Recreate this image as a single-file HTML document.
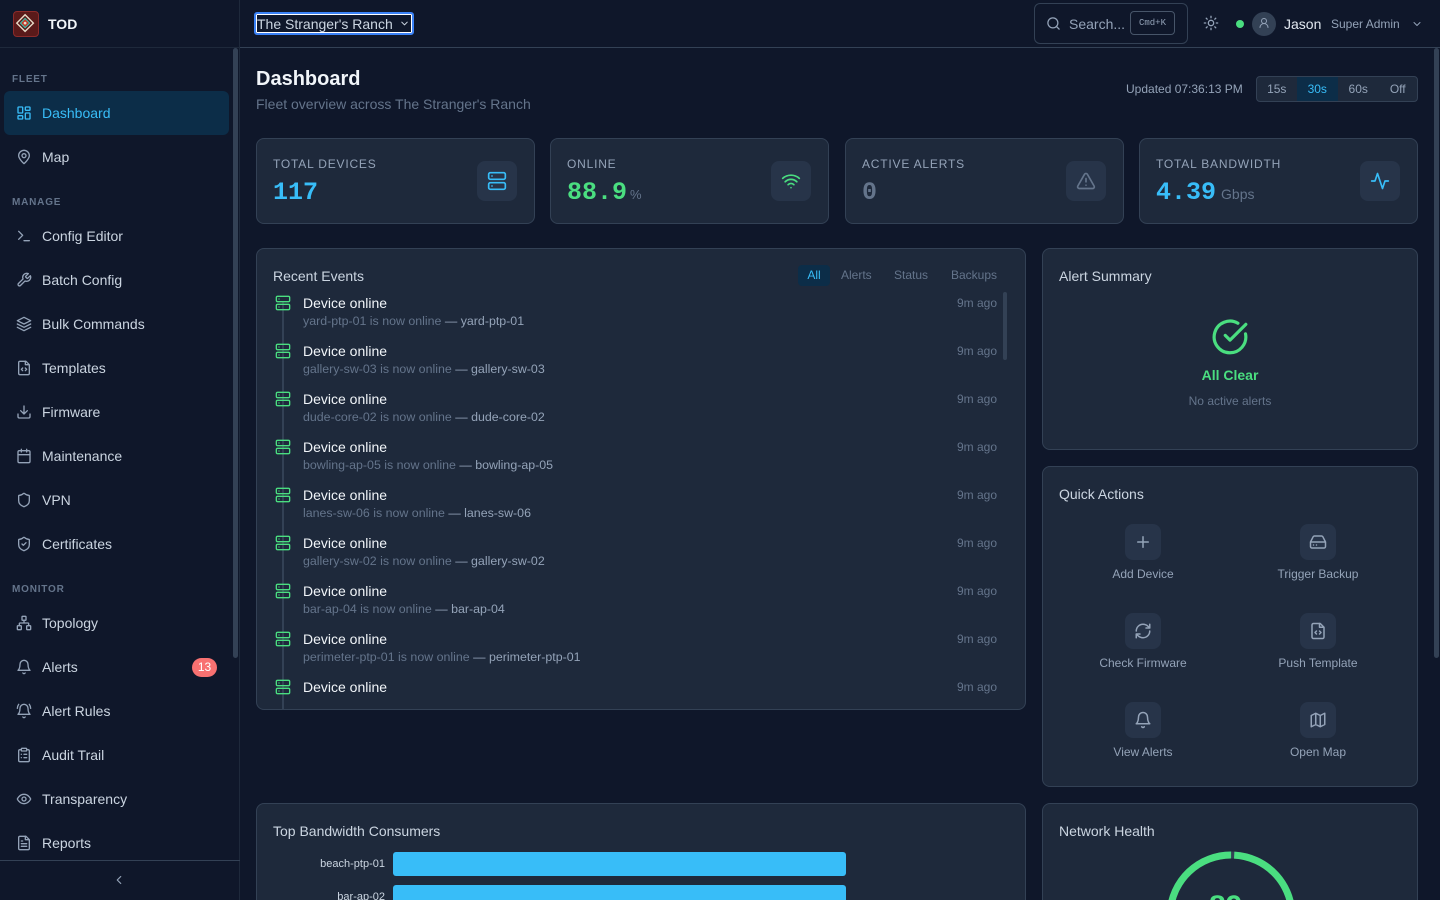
<!DOCTYPE html>
<html><head><meta charset="utf-8"><style>
*{box-sizing:border-box;margin:0;padding:0}
html{width:1440px;height:900px;overflow:hidden}
body{width:1440px;height:900px;overflow:hidden;background:#0f172a;font-family:"Liberation Sans",sans-serif;color:#e2e8f0;position:relative}
.a{position:absolute}
svg.i{width:16px;height:16px;fill:none;stroke:#94a3b8;stroke-width:2;stroke-linecap:round;stroke-linejoin:round}
.side{left:0;top:0;width:240px;height:900px;border-right:1px solid #1e293b;background:#0f172a}
.sec{left:12px;font-size:10px;font-weight:bold;letter-spacing:.8px;color:#64748b}
.it{left:4px;width:225px;height:36px;border-radius:6px;display:flex;align-items:center;padding-left:12px;font-size:14px;color:#cbd5e1}
.it svg{margin-right:10px}
.card{background:#1e293b;border:1px solid #334155;border-radius:8px}
.lbl{font-size:12px;letter-spacing:.8px;color:#94a3b8}
.num{font-family:"Liberation Mono",monospace;font-weight:bold;font-size:25px}
.ib{width:40px;height:40px;border-radius:8px;background:#273449;display:flex;align-items:center;justify-content:center}
.ib svg{width:20px;height:20px}
.ev{left:16px;width:726px;height:48px}
.ev .t{position:absolute;left:30px;top:0;font-size:14px;color:#f1f5f9}
.ev .s{position:absolute;left:30px;top:19px;font-size:12.4px;color:#64748b}
.ev .s b{font-weight:normal;color:#94a3b8}
.ev .tm{position:absolute;right:2px;top:1px;font-size:12px;color:#64748b}
.ev svg{position:absolute;left:2px;top:0;width:16px;height:16px;stroke:#4ade80}
.qa{width:176px;text-align:center;font-size:12px;color:#94a3b8}
.qa .ib{width:36px;height:36px;margin:0 auto 7px}
.qa .ib svg{width:18px;height:18px}
</style></head><body>

<div class="a side">
 <div class="a" style="left:0;top:47px;width:240px;height:1px;background:#1e293b"></div>
 <div class="a" style="left:13px;top:11px;width:26px;height:26px;border-radius:4px;background:#5a1a1a;border:1px solid #8b2b2b">
  <svg viewBox="0 0 26 26" width="24" height="24"><path d="M12 3 L21 12 L12 21 L3 12Z" fill="none" stroke="#e8dcc8" stroke-width="1.5"/><path d="M12 7 L17 12 L12 17 L7 12Z" fill="#c0392b" stroke="#2dd4bf" stroke-width="1"/><circle cx="12" cy="12" r="1.5" fill="#e8dcc8"/></svg>
 </div>
 <div class="a" style="left:48px;top:16px;font-size:14px;font-weight:bold;color:#f1f5f9">TOD</div>

 <div class="a sec" style="top:74px">FLEET</div>
 <div class="a it" style="top:91px;height:44px;background:#0c2d48;color:#38bdf8"><svg class="i" viewBox="0 0 24 24" style="stroke:#38bdf8"><rect x="3" y="3" width="7" height="9" rx="1"/><rect x="14" y="3" width="7" height="5" rx="1"/><rect x="14" y="12" width="7" height="9" rx="1"/><rect x="3" y="16" width="7" height="5" rx="1"/></svg>Dashboard</div>
 <div class="a it" style="top:139px"><svg class="i" viewBox="0 0 24 24"><path d="M20 10c0 5-8 12-8 12s-8-7-8-12a8 8 0 0 1 16 0Z"/><circle cx="12" cy="10" r="3"/></svg>Map</div>

 <div class="a sec" style="top:197px">MANAGE</div>
 <div class="a it" style="top:218px"><svg class="i" viewBox="0 0 24 24"><path d="m4 17 6-6-6-6M12 19h8"/></svg>Config Editor</div>
 <div class="a it" style="top:262px"><svg class="i" viewBox="0 0 24 24"><path d="M14.7 6.3a1 1 0 0 0 0 1.4l1.6 1.6a1 1 0 0 0 1.4 0l3.8-3.8a6 6 0 0 1-7.9 7.9l-6.9 6.9a2.1 2.1 0 0 1-3-3l6.9-6.9a6 6 0 0 1 7.9-7.9l-3.8 3.8Z"/></svg>Batch Config</div>
 <div class="a it" style="top:306px"><svg class="i" viewBox="0 0 24 24"><path d="m12 2 10 5-10 5L2 7Z"/><path d="m2 12 10 5 10-5M2 17l10 5 10-5"/></svg>Bulk Commands</div>
 <div class="a it" style="top:350px"><svg class="i" viewBox="0 0 24 24"><path d="M15 2H6a2 2 0 0 0-2 2v16a2 2 0 0 0 2 2h12a2 2 0 0 0 2-2V7Z"/><path d="M14 2v5h5M10 12l-2 2 2 2M14 16l2-2-2-2"/></svg>Templates</div>
 <div class="a it" style="top:394px"><svg class="i" viewBox="0 0 24 24"><path d="M21 15v4a2 2 0 0 1-2 2H5a2 2 0 0 1-2-2v-4M7 10l5 5 5-5M12 15V3"/></svg>Firmware</div>
 <div class="a it" style="top:438px"><svg class="i" viewBox="0 0 24 24"><rect x="3" y="4" width="18" height="18" rx="2"/><path d="M16 2v4M8 2v4M3 10h18"/></svg>Maintenance</div>
 <div class="a it" style="top:482px"><svg class="i" viewBox="0 0 24 24"><path d="M20 13c0 5-3.5 7.5-7.7 9a1 1 0 0 1-.7 0C7.5 20.5 4 18 4 13V6a1 1 0 0 1 1-1c2 0 4.5-1.2 6.2-2.7a1.2 1.2 0 0 1 1.5 0C14.5 3.8 17 5 19 5a1 1 0 0 1 1 1Z"/></svg>VPN</div>
 <div class="a it" style="top:526px"><svg class="i" viewBox="0 0 24 24"><path d="M20 13c0 5-3.5 7.5-7.7 9a1 1 0 0 1-.7 0C7.5 20.5 4 18 4 13V6a1 1 0 0 1 1-1c2 0 4.5-1.2 6.2-2.7a1.2 1.2 0 0 1 1.5 0C14.5 3.8 17 5 19 5a1 1 0 0 1 1 1Z"/><path d="m9 12 2 2 4-4"/></svg>Certificates</div>

 <div class="a sec" style="top:584px">MONITOR</div>
 <div class="a it" style="top:605px"><svg class="i" viewBox="0 0 24 24"><rect x="16" y="16" width="6" height="6" rx="1"/><rect x="2" y="16" width="6" height="6" rx="1"/><rect x="9" y="2" width="6" height="6" rx="1"/><path d="M5 16v-3a1 1 0 0 1 1-1h12a1 1 0 0 1 1 1v3M12 12V8"/></svg>Topology</div>
 <div class="a it" style="top:649px"><svg class="i" viewBox="0 0 24 24"><path d="M6 8a6 6 0 0 1 12 0c0 7 3 9 3 9H3s3-2 3-9M10.3 21a1.9 1.9 0 0 0 3.4 0"/></svg>Alerts<span style="position:absolute;left:188px;top:9px;width:25px;height:19px;border-radius:10px;background:#f87171;color:#fff;font-size:12px;text-align:center;line-height:19px">13</span></div>
 <div class="a it" style="top:693px"><svg class="i" viewBox="0 0 24 24"><path d="M6 8a6 6 0 0 1 12 0c0 7 3 9 3 9H3s3-2 3-9M10.3 21a1.9 1.9 0 0 0 3.4 0M4 2C2.8 3.7 2 5.7 2 8M22 8c0-2.3-.8-4.3-2-6"/></svg>Alert Rules</div>
 <div class="a it" style="top:737px"><svg class="i" viewBox="0 0 24 24"><rect x="8" y="2" width="8" height="4" rx="1"/><path d="M16 4h2a2 2 0 0 1 2 2v14a2 2 0 0 1-2 2H6a2 2 0 0 1-2-2V6a2 2 0 0 1 2-2h2M12 11h4M12 16h4M8 11h.01M8 16h.01"/></svg>Audit Trail</div>
 <div class="a it" style="top:781px"><svg class="i" viewBox="0 0 24 24"><path d="M2 12s3-7 10-7 10 7 10 7-3 7-10 7-10-7-10-7Z"/><circle cx="12" cy="12" r="3"/></svg>Transparency</div>
 <div class="a it" style="top:825px"><svg class="i" viewBox="0 0 24 24"><path d="M15 2H6a2 2 0 0 0-2 2v16a2 2 0 0 0 2 2h12a2 2 0 0 0 2-2V7Z"/><path d="M14 2v5h5M16 13H8M16 17H8M10 9H8"/></svg>Reports</div>
 <div class="a" style="left:233px;top:48px;width:5px;height:610px;border-radius:3px;background:#334155"></div>
 <div class="a" style="left:0;top:860px;width:240px;height:1px;background:#334155"></div>
 <svg class="a i" viewBox="0 0 24 24" style="left:112px;top:873px;width:14px;height:14px"><path d="m15 18-6-6 6-6"/></svg>
</div>

<!-- header -->
<div class="a" style="left:240px;top:47px;width:1200px;height:1px;background:#334155"></div>
<div class="a" style="left:254px;top:12px;width:160px;height:23px;border:2px solid #3b82f6;border-radius:3px;background:#0f172a;font-size:14px;color:#cbd5e1;padding:2px 0 0 1px;box-shadow:0 0 0 1px #fff inset">The Stranger's Ranch<svg class="a i" viewBox="0 0 24 24" style="left:143px;top:4px;width:11px;height:11px;stroke:#cbd5e1"><path d="m6 9 6 6 6-6"/></svg></div>
<div class="a" style="left:1034px;top:3px;width:154px;height:41px;border:1px solid #334155;border-radius:6px"></div>
<svg class="a i" viewBox="0 0 24 24" style="left:1046px;top:16px;width:15px;height:15px"><circle cx="11" cy="11" r="8"/><path d="m21 21-4.3-4.3"/></svg>
<div class="a" style="left:1069px;top:16px;font-size:14px;color:#94a3b8">Search...</div>
<div class="a" style="left:1130px;top:11px;width:45px;height:24px;border:1px solid #475569;border-radius:4px;font-family:'Liberation Mono',monospace;font-size:9px;color:#94a3b8;text-align:center;line-height:22px">Cmd+K</div>
<svg class="a i" viewBox="0 0 24 24" style="left:1203px;top:15px;width:16px;height:16px"><circle cx="12" cy="12" r="4"/><path d="M12 2v2M12 20v2M4.9 4.9l1.4 1.4M17.7 17.7l1.4 1.4M2 12h2M20 12h2M6.3 17.7l-1.4 1.4M19.1 4.9l-1.4 1.4"/></svg>
<div class="a" style="left:1236px;top:20px;width:8px;height:8px;border-radius:50%;background:#4ade80"></div>
<div class="a" style="left:1252px;top:12px;width:24px;height:24px;border-radius:50%;background:#334155"></div>
<svg class="a i" viewBox="0 0 24 24" style="left:1258px;top:17px;width:12px;height:12px"><circle cx="12" cy="8" r="5"/><path d="M20 21a8 8 0 0 0-16 0"/></svg>
<div class="a" style="left:1284px;top:16px;font-size:14px;color:#e2e8f0">Jason</div>
<div class="a" style="left:1331px;top:17px;font-size:12px;color:#94a3b8">Super Admin</div>
<svg class="a i" viewBox="0 0 24 24" style="left:1411px;top:18px;width:12px;height:12px"><path d="m6 9 6 6 6-6"/></svg>
<div class="a" style="left:1434px;top:48px;width:5px;height:610px;border-radius:3px;background:#334155"></div>

<!-- title -->
<div class="a" style="left:256px;top:68px;font-size:20px;font-weight:bold;color:#f1f5f9">Dashboard</div>
<div class="a" style="left:256px;top:96px;font-size:14px;color:#64748b">Fleet overview across The Stranger's Ranch</div>
<div class="a" style="left:1126px;top:82px;font-size:12px;color:#94a3b8">Updated 07:36:13 PM</div>
<div class="a" style="left:1256px;top:76px;width:162px;height:26px;border:1px solid #334155;border-radius:4px;background:#1e293b;display:flex;font-size:12px;color:#94a3b8;overflow:hidden">
 <div style="width:40px;text-align:center;line-height:24px">15s</div>
 <div style="width:42px;text-align:center;line-height:24px;background:#0c2d48;color:#38bdf8">30s</div>
 <div style="width:41px;text-align:center;line-height:24px">60s</div>
 <div style="width:39px;text-align:center;line-height:24px">Off</div>
</div>

<!-- stats -->
<div class="a card" style="left:256px;top:138px;width:279px;height:86px">
 <div class="a lbl" style="left:16px;top:18px">TOTAL DEVICES</div>
 <div class="a num" style="left:16px;top:39px;color:#38bdf8">117</div>
 <div class="a ib" style="left:220px;top:22px"><svg class="i" viewBox="0 0 24 24" style="stroke:#38bdf8"><rect x="2" y="2" width="20" height="8" rx="2"/><rect x="2" y="14" width="20" height="8" rx="2"/><path d="M6 6h.01M6 18h.01"/></svg></div>
</div>
<div class="a card" style="left:550px;top:138px;width:279px;height:86px">
 <div class="a lbl" style="left:16px;top:18px">ONLINE</div>
 <div class="a num" style="left:16px;top:39px;color:#4ade80">88.9<span style="font-family:'Liberation Sans';font-weight:normal;font-size:13px;color:#64748b;margin-left:3px">%</span></div>
 <div class="a ib" style="left:220px;top:22px"><svg class="i" viewBox="0 0 24 24" style="stroke:#4ade80"><path d="M12 20h.01M2 8.8a15 15 0 0 1 20 0M5 12.9a10 10 0 0 1 14 0M8.5 16.4a5 5 0 0 1 7 0"/></svg></div>
</div>
<div class="a card" style="left:845px;top:138px;width:279px;height:86px">
 <div class="a lbl" style="left:16px;top:18px">ACTIVE ALERTS</div>
 <div class="a num" style="left:16px;top:39px;color:#64748b">0</div>
 <div class="a ib" style="left:220px;top:22px"><svg class="i" viewBox="0 0 24 24" style="stroke:#64748b"><path d="m21.7 18-8-14a2 2 0 0 0-3.5 0l-8 14A2 2 0 0 0 4 21h16a2 2 0 0 0 1.7-3Z"/><path d="M12 9v4M12 17h.01"/></svg></div>
</div>
<div class="a card" style="left:1139px;top:138px;width:279px;height:86px">
 <div class="a lbl" style="left:16px;top:18px">TOTAL BANDWIDTH</div>
 <div class="a num" style="left:16px;top:39px;color:#38bdf8">4.39<span style="font-family:'Liberation Sans';font-weight:normal;font-size:14px;color:#64748b;margin-left:5px">Gbps</span></div>
 <div class="a ib" style="left:220px;top:22px"><svg class="i" viewBox="0 0 24 24" style="stroke:#38bdf8"><path d="M22 12h-4l-3 9L9 3l-3 9H2"/></svg></div>
</div>

<!-- recent events -->
<div class="a card" style="left:256px;top:248px;width:770px;height:462px;overflow:hidden">
 <div class="a" style="left:16px;top:19px;font-size:14px;color:#cbd5e1">Recent Events</div>
 <div class="a" style="left:541px;top:16px;width:32px;height:21px;border-radius:4px;background:#0c2d48;color:#38bdf8;font-size:12px;text-align:center;line-height:21px">All</div>
 <div class="a" style="left:584px;top:19px;font-size:12px;color:#64748b">Alerts</div>
 <div class="a" style="left:637px;top:19px;font-size:12px;color:#64748b">Status</div>
 <div class="a" style="left:694px;top:19px;font-size:12px;color:#64748b">Backups</div>
 <div class="a" style="left:25px;top:52px;width:2px;height:410px;background:#334155"></div>
 <div class="a" style="left:746px;top:43px;width:4px;height:68px;border-radius:2px;background:#334155"></div>
 <div class="a ev" style="top:46px"><svg class="i" viewBox="0 0 24 24"><rect x="2" y="2" width="20" height="8" rx="2"/><rect x="2" y="14" width="20" height="8" rx="2"/><path d="M6 6h.01M6 18h.01"/></svg><div class="t">Device online</div><div class="s">yard-ptp-01 is now online <b>— yard-ptp-01</b></div><div class="tm">9m ago</div></div>
 <div class="a ev" style="top:94px"><svg class="i" viewBox="0 0 24 24"><rect x="2" y="2" width="20" height="8" rx="2"/><rect x="2" y="14" width="20" height="8" rx="2"/><path d="M6 6h.01M6 18h.01"/></svg><div class="t">Device online</div><div class="s">gallery-sw-03 is now online <b>— gallery-sw-03</b></div><div class="tm">9m ago</div></div>
 <div class="a ev" style="top:142px"><svg class="i" viewBox="0 0 24 24"><rect x="2" y="2" width="20" height="8" rx="2"/><rect x="2" y="14" width="20" height="8" rx="2"/><path d="M6 6h.01M6 18h.01"/></svg><div class="t">Device online</div><div class="s">dude-core-02 is now online <b>— dude-core-02</b></div><div class="tm">9m ago</div></div>
 <div class="a ev" style="top:190px"><svg class="i" viewBox="0 0 24 24"><rect x="2" y="2" width="20" height="8" rx="2"/><rect x="2" y="14" width="20" height="8" rx="2"/><path d="M6 6h.01M6 18h.01"/></svg><div class="t">Device online</div><div class="s">bowling-ap-05 is now online <b>— bowling-ap-05</b></div><div class="tm">9m ago</div></div>
 <div class="a ev" style="top:238px"><svg class="i" viewBox="0 0 24 24"><rect x="2" y="2" width="20" height="8" rx="2"/><rect x="2" y="14" width="20" height="8" rx="2"/><path d="M6 6h.01M6 18h.01"/></svg><div class="t">Device online</div><div class="s">lanes-sw-06 is now online <b>— lanes-sw-06</b></div><div class="tm">9m ago</div></div>
 <div class="a ev" style="top:286px"><svg class="i" viewBox="0 0 24 24"><rect x="2" y="2" width="20" height="8" rx="2"/><rect x="2" y="14" width="20" height="8" rx="2"/><path d="M6 6h.01M6 18h.01"/></svg><div class="t">Device online</div><div class="s">gallery-sw-02 is now online <b>— gallery-sw-02</b></div><div class="tm">9m ago</div></div>
 <div class="a ev" style="top:334px"><svg class="i" viewBox="0 0 24 24"><rect x="2" y="2" width="20" height="8" rx="2"/><rect x="2" y="14" width="20" height="8" rx="2"/><path d="M6 6h.01M6 18h.01"/></svg><div class="t">Device online</div><div class="s">bar-ap-04 is now online <b>— bar-ap-04</b></div><div class="tm">9m ago</div></div>
 <div class="a ev" style="top:382px"><svg class="i" viewBox="0 0 24 24"><rect x="2" y="2" width="20" height="8" rx="2"/><rect x="2" y="14" width="20" height="8" rx="2"/><path d="M6 6h.01M6 18h.01"/></svg><div class="t">Device online</div><div class="s">perimeter-ptp-01 is now online <b>— perimeter-ptp-01</b></div><div class="tm">9m ago</div></div>
 <div class="a ev" style="top:430px"><svg class="i" viewBox="0 0 24 24"><rect x="2" y="2" width="20" height="8" rx="2"/><rect x="2" y="14" width="20" height="8" rx="2"/><path d="M6 6h.01M6 18h.01"/></svg><div class="t">Device online</div><div class="tm">9m ago</div></div>
</div>

<!-- alert summary -->
<div class="a card" style="left:1042px;top:248px;width:376px;height:202px">
 <div class="a" style="left:16px;top:19px;font-size:14px;color:#cbd5e1">Alert Summary</div>
 <svg class="a" viewBox="0 0 24 24" style="left:168px;top:69px;width:38px;height:38px;fill:none;stroke:#4ade80;stroke-width:2;stroke-linecap:round;stroke-linejoin:round"><path d="M21.8 10A10 10 0 1 1 17 3.3"/><path d="m9 11 3 3L22 4"/></svg>
 <div class="a" style="left:0;width:374px;top:118px;text-align:center;font-size:14px;font-weight:bold;color:#4ade80">All Clear</div>
 <div class="a" style="left:0;width:374px;top:145px;text-align:center;font-size:12px;color:#64748b">No active alerts</div>
</div>

<!-- quick actions -->
<div class="a card" style="left:1042px;top:466px;width:376px;height:321px">
 <div class="a" style="left:16px;top:19px;font-size:14px;color:#cbd5e1">Quick Actions</div>
 <div class="a qa" style="left:12px;top:57px"><div class="ib"><svg class="i" viewBox="0 0 24 24"><path d="M5 12h14M12 5v14"/></svg></div>Add Device</div>
 <div class="a qa" style="left:187px;top:57px"><div class="ib"><svg class="i" viewBox="0 0 24 24"><path d="M22 12H2M5.5 5.1 2 12v6a2 2 0 0 0 2 2h16a2 2 0 0 0 2-2v-6l-3.5-6.9A2 2 0 0 0 16.8 4H7.2a2 2 0 0 0-1.7 1.1ZM6 16h.01M10 16h.01"/></svg></div>Trigger Backup</div>
 <div class="a qa" style="left:12px;top:146px"><div class="ib"><svg class="i" viewBox="0 0 24 24"><path d="M3 12a9 9 0 0 1 9-9 9.8 9.8 0 0 1 6.7 2.7L21 8M21 3v5h-5M21 12a9 9 0 0 1-9 9 9.8 9.8 0 0 1-6.7-2.7L3 16M8 16H3v5"/></svg></div>Check Firmware</div>
 <div class="a qa" style="left:187px;top:146px"><div class="ib"><svg class="i" viewBox="0 0 24 24"><path d="M15 2H6a2 2 0 0 0-2 2v16a2 2 0 0 0 2 2h12a2 2 0 0 0 2-2V7Z"/><path d="M14 2v5h5M10 12l-2 2 2 2M14 16l2-2-2-2"/></svg></div>Push Template</div>
 <div class="a qa" style="left:12px;top:235px"><div class="ib"><svg class="i" viewBox="0 0 24 24"><path d="M6 8a6 6 0 0 1 12 0c0 7 3 9 3 9H3s3-2 3-9M10.3 21a1.9 1.9 0 0 0 3.4 0"/></svg></div>View Alerts</div>
 <div class="a qa" style="left:187px;top:235px"><div class="ib"><svg class="i" viewBox="0 0 24 24"><path d="M3 6l6-3 6 3 6-3v15l-6 3-6-3-6 3ZM9 3v15M15 6v15"/></svg></div>Open Map</div>
</div>

<!-- bottom -->
<div class="a card" style="left:256px;top:803px;width:770px;height:120px;overflow:hidden">
 <div class="a" style="left:16px;top:19px;font-size:14px;color:#cbd5e1">Top Bandwidth Consumers</div>
 <div class="a" style="left:0;width:128px;top:54px;text-align:right;font-size:11px;color:#cbd5e1">beach-ptp-01</div>
 <div class="a" style="left:136px;top:48px;width:453px;height:24px;border-radius:3px;background:#38bdf8"></div>
 <div class="a" style="left:0;width:128px;top:87px;text-align:right;font-size:11px;color:#cbd5e1">bar-ap-02</div>
 <div class="a" style="left:136px;top:81px;width:453px;height:24px;border-radius:3px;background:#38bdf8"></div>
</div>
<div class="a card" style="left:1042px;top:803px;width:376px;height:120px;overflow:hidden">
 <div class="a" style="left:16px;top:19px;font-size:14px;color:#cbd5e1">Network Health</div>
 <svg class="a" style="left:122px;top:46px" width="132" height="132" viewBox="0 0 132 132"><circle cx="66" cy="66" r="61" fill="none" stroke="#334155" stroke-width="7"/><circle cx="66" cy="66" r="61" fill="none" stroke="#4ade80" stroke-width="7" stroke-dasharray="380 4" transform="rotate(-87 66 66)"/></svg>
 <div class="a" style="left:166px;top:86px;font-size:30px;font-weight:bold;color:#4ade80">89</div>
</div>
</body></html>
